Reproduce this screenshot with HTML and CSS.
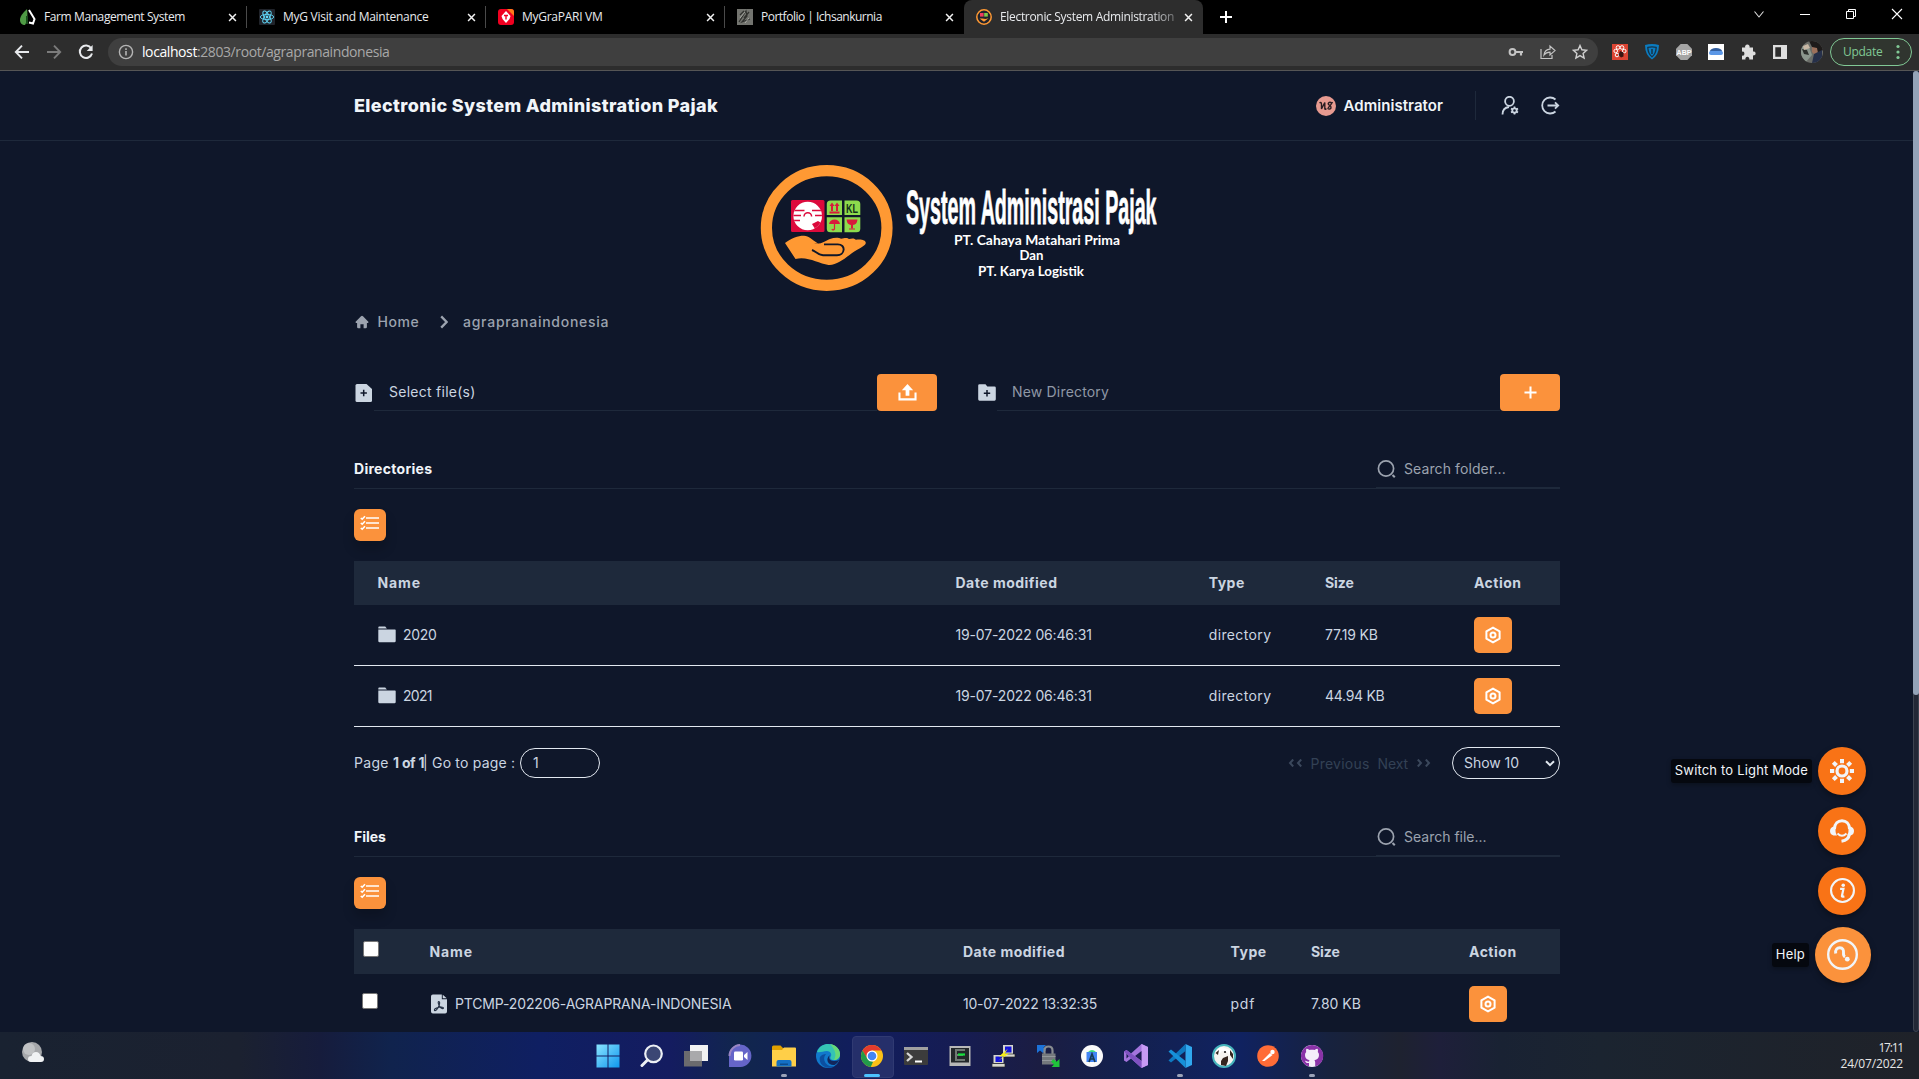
FILE: index.html
```
<!DOCTYPE html>
<html lang="en">
<head>
<meta charset="utf-8">
<title>Electronic System Administration Pajak</title>
<link rel="stylesheet" href="styles.css">
</head>
<body>
<svg class="defs" width="0" height="0">
  <symbol id="close" viewBox="0 0 10 10"><path d="M1.2 1.2l7.6 7.6M8.8 1.2L1.2 8.8" stroke="#f1f1f1" stroke-width="1.7" fill="none"/></symbol>
  <symbol id="hex" viewBox="0 0 18 18"><path d="M9 1.6l6.6 3.7v7.4L9 16.4l-6.6-3.7V5.3z" fill="none" stroke="#fff" stroke-width="2" stroke-linejoin="round"/><circle cx="9" cy="9" r="2.5" fill="none" stroke="#fff" stroke-width="2"/></symbol>
  <symbol id="checks" viewBox="0 0 20 16"><g fill="none" stroke="#fff" stroke-width="1.4"><path d="M6 3h13M6 8h13M6 13h13"/><path d="M.8 3l1.4 1.2L5 1.2M.8 8l1.4 1.2L5 6.2M.8 13l1.4 1.2L5 11.2" stroke-width="1.6"/></g></symbol>
  <symbol id="lens" viewBox="0 0 20 20"><circle cx="9" cy="9.5" r="7.6" fill="none" stroke="#9ca3af" stroke-width="1.7"/><path d="M15.500 16l2.300 2.300" stroke="#9ca3af" stroke-width="2"/></symbol>
  <symbol id="folder" viewBox="0 0 18 17"><path d="M.3 1.8C.3 1 .8.5 1.5.5h5.7l1.7 1.9H.3z" fill="#cbd5e1"/><path d="M.3 3.6h16.4c.7 0 1 .4 1 1v10.5c0 .7-.4 1.1-1 1.1H1.3c-.6 0-1-.4-1-1.1z" fill="#cbd5e1"/></symbol>
</svg>

<div class="tabstrip">
  <div class="tab"><svg class="fav" viewBox="0 0 16 16"><path d="M7 0C3 4 0 7 0 11c0 3 2 5 5 5 2-3 3-9 2-16z" fill="#4f9b45"/><path d="M7 7v8" stroke="#184c1b" stroke-width="2"/><path d="M9 1l5.500 9-1.500 4.500-4-1" fill="none" stroke="#fff" stroke-width="2"/></svg><span class="tab-title t1">Farm Management System</span><svg class="x"><use href="#close"/></svg></div>
  <div class="tab"><svg class="fav" viewBox="0 0 16 16"><rect width="16" height="16" rx="1" fill="#20232a"/><g fill="none" stroke="#61dafb" stroke-width=".9"><ellipse cx="8" cy="8" rx="6.7" ry="2.6"/><ellipse cx="8" cy="8" rx="6.7" ry="2.6" transform="rotate(60 8 8)"/><ellipse cx="8" cy="8" rx="6.7" ry="2.6" transform="rotate(120 8 8)"/></g><circle cx="8" cy="8" r="1.4" fill="#61dafb"/></svg><span class="tab-title t2">MyG Visit and Maintenance</span><svg class="x"><use href="#close"/></svg></div>
  <div class="tab"><svg class="fav" viewBox="0 0 16 16"><rect width="16" height="16" rx="3" fill="#f00020"/><path d="M9 0h4q3 0 3 3v4z" fill="#ff7a1a"/><path d="M8 2l4.500 5-1 3L8 14l-3.500-4-1-3z" fill="#fff"/><path d="M6 6.500h4M8 6.500v4" stroke="#f00020" stroke-width="1.400"/></svg><span class="tab-title t3">MyGraPARI VM</span><svg class="x"><use href="#close"/></svg></div>
  <div class="tab"><svg class="fav" viewBox="0 0 16 16"><rect width="16" height="16" fill="#73746f"/><path d="M2 13L9 2l1 5-5 6 8-3M7 9l5-6M3 6l4-4" fill="none" stroke="#30312e" stroke-width="1.200"/><path d="M3 9l5-6M8 14l4-5" stroke="#b9bab4" stroke-width=".8"/></svg><span class="tab-title t4">Portfolio | Ichsankurnia</span><svg class="x"><use href="#close"/></svg></div>
  <div class="tab active"><svg class="fav" viewBox="0 0 16 16"><circle cx="8" cy="8" r="7.200" fill="#20232c" stroke="#ff9933" stroke-width="1.500"/><rect x="4" y="4" width="3.600" height="3.600" fill="#ef3b62"/><rect x="8.200" y="4" width="3.600" height="3.600" fill="#7cc84a"/><path d="M3.500 9.500h3l3 .5 3-.8-4.500 3.500z" fill="#ff9933"/></svg><span class="tab-title t5">Electronic System Administration</span><svg class="x"><use href="#close"/></svg></div>
  <svg class="newtab" viewBox="0 0 12 12"><path d="M6 0v12M0 6h12" stroke="#fff" stroke-width="2"/></svg>
  <div class="winctl">
    <svg viewBox="0 0 12 12"><path d="M1.500 3.500L6 9l4.500-5.500" fill="none" stroke="#ddd" stroke-width="1.100"/></svg>
    <svg viewBox="0 0 12 12"><path d="M1 6.500h10" stroke="#fff"/></svg>
    <svg viewBox="0 0 12 12"><path d="M3.500 3V1.500h7v7H9M1.500 3.500h7v7h-7z" fill="none" stroke="#fff"/></svg>
    <svg viewBox="0 0 12 12"><path d="M1 1l10 10M11 1L1 11" stroke="#fff" stroke-width="1.100"/></svg>
  </div>
</div>

<div class="toolbar">
  <div class="nav">
    <svg viewBox="0 0 16 16"><path d="M15 8H2M8 1.700L1.800 8 8 14.300" fill="none" stroke="#e8eaed" stroke-width="1.900"/></svg>
    <svg viewBox="0 0 16 16"><path d="M1 8h13M8 1.700L14.200 8 8 14.300" fill="none" stroke="#7b7b7b" stroke-width="1.900"/></svg>
    <svg viewBox="0 0 16 16"><path d="M13.200 4.300A6.200 6.200 0 1 0 14 9.500" fill="none" stroke="#e8eaed" stroke-width="2"/><path d="M14.600 1v6H8.700z" fill="#e8eaed"/></svg>
  </div>
  <div class="omnibox">
    <svg class="info" viewBox="0 0 16 16"><circle cx="8" cy="8" r="6.600" fill="none" stroke="#b5b5b5" stroke-width="1.400"/><path d="M8 7v4.500M8 4.300v1.600" stroke="#b5b5b5" stroke-width="1.600"/></svg>
    <span class="url"><b>localhost</b>:2803/root/agrapranaindonesia</span>
    <div class="omni-icons">
      <svg viewBox="0 0 16 16"><circle cx="4.500" cy="8" r="2.900" fill="none" stroke="#c4c4c4" stroke-width="2"/><path d="M7 8h8M13 8v3.500" stroke="#c4c4c4" stroke-width="2.200"/></svg>
      <svg viewBox="0 0 16 16"><path d="M1 5v9.500h11V11" fill="none" stroke="#c4c4c4" stroke-width="1.200"/><path d="M4 11c.5-4 2.500-5.600 6-5.800V2l5 4.600-5 4.400V8.200c-3 0-4.500.8-6 2.800z" fill="none" stroke="#c4c4c4" stroke-width="1.200"/></svg>
      <svg viewBox="0 0 16 16"><path d="M8 1.500l1.900 4.300 4.700.5-3.500 3.100 1 4.600L8 11.600 3.900 14l1-4.600L1.400 6.300l4.700-.5z" fill="none" stroke="#d0d0d0" stroke-width="1.400"/></svg>
    </div>
  </div>
  <div class="ext">
    <svg viewBox="0 0 16 16"><rect width="16" height="16" fill="#dc4433"/><g fill="none" stroke="#fff" stroke-width="1"><circle cx="6" cy="3.500" r="1.800"/><circle cx="10" cy="3.500" r="1.800"/><circle cx="3.700" cy="7" r="1.800"/><circle cx="12.300" cy="7" r="1.800"/><circle cx="5" cy="11" r="1.800"/></g><path d="M8 7l3.500 1.500v4L9 13.500 6.500 11z" fill="#3a1512"/></svg>
    <svg viewBox="0 0 16 16"><path d="M1 1q7-2 14 0 0 10-7 14.500Q1 11 1 1z" fill="#0b7cc0"/><path d="M3.800 3.400q4.200-1 8.400 0Q12 9.500 8 12.800 4 9.500 3.800 3.400z" fill="none" stroke="#173246" stroke-width="1.300"/><path d="M8 5v5" stroke="#173246" stroke-width="1.500"/></svg>
    <svg viewBox="0 0 16 16"><path d="M4.700 0h6.600L16 4.700v6.600L11.300 16H4.700L0 11.300V4.700z" fill="#a5a5a5"/><text x="8" y="10.800" text-anchor="middle" class="abp">ABP</text></svg>
    <svg viewBox="0 0 16 16"><rect width="16" height="16" fill="#fff"/><ellipse cx="8" cy="7" rx="6" ry="3" fill="#335f9f"/><rect x="1" y="7" width="14" height="4" rx="2" fill="#5b97e6"/></svg>
    <svg viewBox="0 0 16 16"><path d="M2 3.500h3.200a2.300 2.300 0 1 1 4.300 0H13v4a2 2 0 1 1 0 3.800v4.200H9.200a2 2 0 1 0-3.700 0H2v-3.900a2 2 0 1 0 0-3.900z" fill="#dedede"/></svg>
    <svg viewBox="0 0 16 16"><path d="M1 1h14v14H1zM3.300 3.300v9.400H9V3.300z" fill="#dedede" fill-rule="evenodd"/></svg>
    <svg class="me" viewBox="0 0 22 22"><clipPath id="c"><circle cx="11" cy="11" r="11"/></clipPath><g clip-path="url(#c)"><rect width="22" height="22" fill="#6b6d68"/><path d="M8 0h14v9l-5 4-5-5z" fill="#1d1a1a"/><path d="M0 4l8 2 3 8-7 8H0z" fill="#8b968d"/><path d="M1 8l5 1 2 5-5-1z" fill="#2c2f2c"/><path d="M11 6l5 1 1 5-3 2-3-3z" fill="#9c705b"/><path d="M13 13l8-4v13H11z" fill="#26304a"/><path d="M2 5l5-2 2 4-6 2z" fill="#c8b8a5"/></g></svg>
  </div>
  <div class="update"><span>Update</span><svg viewBox="0 0 4 16"><g fill="#81c995"><circle cx="2" cy="2.500" r="1.600"/><circle cx="2" cy="8" r="1.600"/><circle cx="2" cy="13.500" r="1.600"/></g></svg></div>
</div>

<div class="page">
  <header class="header">
    <div class="wrap header-in">
      <h1>Electronic System Administration Pajak</h1>
      <div class="user">
        <svg class="avatar" viewBox="0 0 20 20"><circle cx="10" cy="10" r="10" fill="#e79a90"/><path d="M3.500 7q2-1.500 2 1.500V13L8.800 6.500V13q.5 1 1.500-.5M15.500 7q-1.500-1.500-3 0c-1.500 2 3.500 2.500 2.500 5q-1.500 2-3.500.3M12 12q3-3 4.500-6" fill="none" stroke="#2a1d22" stroke-width="1.400"/></svg>
        <b>Administrator</b>
      </div>
      <div class="head-icons">
        <svg viewBox="0 0 20 20"><g fill="none" stroke="#cbd5e1" stroke-width="1.800"><ellipse cx="9.500" cy="5.300" rx="4.400" ry="4.500"/><path d="M2.500 18.500c0-4.600 2-7 6.500-7.500"/><circle cx="14.500" cy="14.500" r="2.200"/></g><path d="M14.500 10.500v1.800M14.500 16.700v1.800M11 12.500l1.600.9M16.400 15.600l1.600.9M11 16.500l1.600-.9M16.400 13.400l1.600-.9" stroke="#cbd5e1" stroke-width="1.700"/></svg>
        <svg viewBox="0 0 20 20"><path d="M15.500 3.500A8 8 0 1 0 15.500 15.500M7.500 9.500H18M15 6.400L18.200 9.500 15 12.600" fill="none" stroke="#cbd5e1" stroke-width="1.800"/></svg>
      </div>
    </div>
  </header>

  <main class="wrap">
    <div class="logo">
      <svg viewBox="757 163 400 130" width="400" height="130">
        <ellipse cx="826.700" cy="228" rx="60.300" ry="57.300" fill="none" stroke="#ff9933" stroke-width="11.200"/>
        <rect x="791" y="200" width="33.500" height="32" rx="1.500" fill="#dc0a3c"/>
        <clipPath id="sun"><circle cx="807.700" cy="216" r="14.300"/></clipPath>
        <g clip-path="url(#sun)"><rect x="791" y="200" width="34" height="32" fill="#fff"/><path d="M791 210.500h13.500M812 210.500h13M791 215.500h10M815 215.500h10M791 220.500h9" stroke="#dc0a3c" stroke-width="1.500"/><path d="M804 216.500a3.800 3.800 0 0 1 7.600 0" fill="none" stroke="#dc0a3c" stroke-width="1.500"/><path d="M812 224l6-3 5 3v8h-6z" fill="#dc0a3c"/></g>
        <path d="M830.500 200.500h11.500v14.500h-15.200v-11q0-3.500 3.700-3.500zM844.500 200.500h12q3.800 0 3.800 3.500v11h-15.800zM826.800 217.300H842v15h-11.500q-3.700 0-3.700-3.500zM844.500 217.300h15.800v11.500q0 3.500-3.800 3.500h-12z" fill="#8ddb4c"/>
        <path d="M829.500 212.500h10M832 211v-6.500M837 211v-6.500" stroke="#d81b3c" stroke-width="2"/><path d="M829.500 206l2.500-3.500 2.500 3.500zM834.500 206l2.500-3.500 2.500 3.500z" fill="#d81b3c"/>
        <text x="846" y="213" class="logo-kl" textLength="12" lengthAdjust="spacingAndGlyphs">KL</text>
        <path d="M829 224q1-4.500 5.500-4.500t5.500 4.500zM846.500 219.500h11q-.5 5-4.500 5.500v3.500h-2V225q-4-.5-4.500-5.500z" fill="#d81b3c"/><path d="M834.500 223v6q-2 2-2.500 0M849 229h6" fill="none" stroke="#d81b3c" stroke-width="1.200"/>
        <path d="M785 243c7-5 13-7.300 19-7.200 5 .2 8 4 14 7.700h-4c7.500 1.300 12-3 16-4.500 4-1.600 8.500-1.800 11-.3 5-1.300 7-.6 8 .3 4-1.300 6-.3 7 .8 6-1 11 .8 9.500 4.200-1.500 2.700-9 5.500-16 11-7 5.300-14 10.500-21 9.900-10-1.300-21-9-33-5.900z" fill="#ff9933"/>
        <path d="M812 250c4 1.500 6 5 11 5.200h14c8 0 9.500-11 .5-10.800H824" fill="none" stroke="#0f172a" stroke-width="1.900"/>
        <text x="906" y="223.500" class="logo-t" textLength="250.500" lengthAdjust="spacingAndGlyphs">System Administrasi Pajak</text>
        <text x="954" y="245" class="logo-s" textLength="166" lengthAdjust="spacingAndGlyphs">PT. Cahaya Matahari Prima</text>
        <text x="1019.500" y="260" class="logo-s" textLength="24" lengthAdjust="spacingAndGlyphs">Dan</text>
        <text x="978" y="275.500" class="logo-s" textLength="106" lengthAdjust="spacingAndGlyphs">PT. Karya Logistik</text>
      </svg>
    </div>

    <nav class="crumbs">
      <svg class="home" viewBox="0 0 14 14"><path d="M7 .7l1 .5L13.600 7l-.6.900h-1.100V12q0 1.300-1.200 1.300H8.600V9.200H5.400v4.100H3.300Q2.100 13.300 2.100 12V7.900H1L.4 7 6 1.200z" fill="#9ca3af"/></svg>
      <span class="ls8">Home</span>
      <svg class="chev" viewBox="0 0 8 14"><path d="M1.200 1.400L6.600 7l-5.400 5.600" fill="none" stroke="#9ca3af" stroke-width="2.300"/></svg>
      <span class="ls8">agrapranaindonesia</span>
    </nav>

    <div class="forms">
      <div class="field">
        <svg class="f-ico" viewBox="0 0 17 18"><path d="M2 0h9.500L17 5v11.500q0 1.500-1.500 1.500H2Q.5 18 .5 16.500v-15Q.5 0 2 0z" fill="#cbd5e1"/><path d="M8.700 5.800v6.400M5.500 9h6.400" stroke="#0f172a" stroke-width="1.500"/></svg>
        <div class="line sel">Select file(s)</div>
        <button class="btn wide"><svg viewBox="0 0 20 18"><path d="M1.500 9v7.300h17V9" fill="none" stroke="#fff" stroke-width="2.200"/><path d="M10 0l6 6.500h-4V12.500H8V6.500H4z" fill="#fff"/></svg></button>
      </div>
      <div class="field">
        <svg class="f-ico dir" viewBox="0 0 18 17"><path d="M1.500.3h6L9.300 2.500h7.200q1.300 0 1.300 1.300v11.500q0 1.400-1.300 1.400h-15Q.2 16.700.2 15.300V1.600Q.2.300 1.500.3z" fill="#cbd5e1"/><path d="M9 6v6.400M5.800 9.200h6.400" stroke="#0f172a" stroke-width="1.500"/></svg>
        <div class="line newdir">New Directory</div>
        <button class="btn wide"><svg class="plus" viewBox="0 0 14 14"><path d="M7 .5v13M.5 7h13" stroke="#fff" stroke-width="2.200"/></svg></button>
      </div>
    </div>

    <section class="block">
      <div class="block-head"><h2>Directories</h2><div class="search"><svg><use href="#lens"/></svg><span>Search folder...</span></div></div>
      <button class="btn list"><svg><use href="#checks"/></svg></button>
      <div class="table dirs">
        <div class="tr th"><span class="ls11">Name</span><span>Date modified</span><span>Type</span><span class="ls1">Size</span><span>Action</span></div>
        <div class="tr"><span class="name"><svg class="fold"><use href="#folder"/></svg>2020</span><span class="num">19-07-2022 06:46:31</span><span class="ls5">directory</span><span class="num">77.19 KB</span><button class="btn act"><svg><use href="#hex"/></svg></button></div>
        <div class="tr"><span class="name n2"><svg class="fold"><use href="#folder"/></svg>2021</span><span class="num">19-07-2022 06:46:31</span><span class="ls5">directory</span><span class="num kb">44.94 KB</span><button class="btn act"><svg><use href="#hex"/></svg></button></div>
      </div>
      <div class="pager">
        <span class="pg">Page</span><b>1 of 1</b><span class="goto">| Go to page :</span><span class="pginput">1</span>
        <div class="pgnav"><svg viewBox="0 0 15 8"><path d="M5.200.5L2 4l3.200 3.500M13.200.5L10 4l3.200 3.500" fill="none" stroke="#3b485c" stroke-width="2"/></svg><span class="prev">Previous</span><span class="next">Next</span><svg viewBox="0 0 15 8"><path d="M1.800.5L5 4 1.800 7.500M9.800.5L13 4 9.800 7.500" fill="none" stroke="#3b485c" stroke-width="2"/></svg></div>
        <div class="select"><span>Show 10</span><svg viewBox="0 0 10 7"><path d="M1 1.200l4 4 4-4" fill="none" stroke="#e2e8f0" stroke-width="2"/></svg></div>
      </div>
    </section>

    <section class="block">
      <div class="block-head"><h2 class="ls1">Files</h2><div class="search"><svg><use href="#lens"/></svg><span class="sf">Search file...</span></div></div>
      <button class="btn list"><svg><use href="#checks"/></svg></button>
      <div class="table files">
        <div class="tr th"><i class="box head"></i><span class="ls11">Name</span><span>Date modified</span><span>Type</span><span class="ls1">Size</span><span>Action</span></div>
        <div class="tr"><i class="box"></i><span class="name pdfname"><svg class="pdf" viewBox="0 0 17 20"><path d="M2 0h9.500v5H17v13q0 2-2 2H2q-2 0-2-2V2q0-2 2-2z" fill="#cbd5e1"/><path d="M12.500.3l4.200 3.700h-4.200z" fill="#cbd5e1"/><path d="M8.200 7.500c1.500 0 1 2.500.3 4.300-1 2.700-3.500 5.700-4.700 5.200-1-1.500 2-3 5-3.500 2.500-.4 4.700-.1 4.400 1-.6 1.200-3.400-.6-4.400-2.500-.9-1.700-1.700-4.300-.6-4.500z" fill="none" stroke="#243044" stroke-width="1.200"/></svg>PTCMP-202206-AGRAPRANA-INDONESIA</span><span class="num2">10-07-2022 13:32:35</span><span class="pdft">pdf</span><span>7.80 KB</span><button class="btn act"><svg><use href="#hex"/></svg></button></div>
      </div>
    </section>
  </main>

  <div class="fabs">
    <div class="fab"><span class="tip mode">Switch to Light Mode</span><svg viewBox="0 0 24 24"><circle cx="12" cy="12" r="5" fill="none" stroke="#f1f5f9" stroke-width="3.200"/><path d="M12 0v4.200M12 19.800V24M0 12h4.200M19.800 12H24M3.300 3.300l3.200 3.200M17.500 17.500l3.200 3.200M3.300 20.700l3.200-3.200M17.500 6.500l3.200-3.200" stroke="#f1f5f9" stroke-width="4"/></svg></div>
    <div class="fab"><svg viewBox="0 0 24 24"><path d="M4.500 10C4.500 4.500 8 1.700 12 1.700S19.500 4.500 19.500 10" fill="none" stroke="#f1f5f9" stroke-width="3"/><path d="M6 7.500H3.500Q0 8.500 0 12t3.500 4.500H7q-1.500-2-1.500-4.500T6 7.500zM18 7.500h2.500Q24 8.500 24 12t-3.300 4.500H17q1.500-2 1.500-4.500T18 7.500z" fill="#f1f5f9"/><path d="M19.500 15c-.6 4.500-3 6.500-8 7.200" fill="none" stroke="#f1f5f9" stroke-width="3"/><path d="M7.500 14.500q4.500 4.500 9 0" fill="none" stroke="#f1f5f9" stroke-width="1.800"/></svg></div>
    <div class="fab"><svg class="up" viewBox="0 0 24 24"><circle cx="12" cy="12" r="11" fill="none" stroke="#f1f5f9" stroke-width="2"/><circle cx="12.700" cy="7" r="1.700" fill="#f1f5f9"/><path d="M9.700 10.500h3.200l-1.500 7q0 .8 2.400.1" fill="none" stroke="#f1f5f9" stroke-width="2.100"/></svg></div>
    <div class="fab big"><span class="tip help">Help</span><svg viewBox="0 0 32 32"><circle cx="15.500" cy="15.500" r="14.300" fill="none" stroke="#f1f5f9" stroke-width="2.400"/><path d="M8.700 14.500c-.6-4 1.500-5.800 4-5.800 3.300 0 4 2.500 3.800 5-.2 2 .3 3.600 1.500 4.200" fill="none" stroke="#f1f5f9" stroke-width="2.900"/><circle cx="20.300" cy="20.200" r="2.400" fill="#f1f5f9"/></svg></div>
  </div>
  <div class="scroll"><i></i></div>
</div>

<div class="taskbar">
  <svg class="weather" viewBox="0 0 26 24"><circle cx="12" cy="11" r="10" fill="#a6a8ab"/><circle cx="9" cy="8" r="6" fill="#c0c2c4"/><path d="M11 21q-3 0-3-3t3.500-3q1-4 4.500-4t4.500 4q3.500 0 3.500 3t-3 3z" fill="#f0f2f4"/></svg>
  <div class="apps">
    <span><svg viewBox="0 0 24 24"><defs><linearGradient id="w" x1="0" y1="0" x2="1" y2="1"><stop offset="0" stop-color="#8ae4ff"/><stop offset="1" stop-color="#0f97ee"/></linearGradient></defs><path d="M.5.500H11.500V11.500H.5zM12.500.500H23.500V11.500H12.500zM.5 12.500H11.500V23.500H.5zM12.500 12.500H23.500V23.500H12.500z" fill="url(#w)"/></svg></span>
    <span><svg viewBox="0 0 24 24"><circle cx="13.500" cy="9.800" r="8.300" fill="#3b4674" stroke="#eceff4" stroke-width="2.200"/><path d="M7.500 16L2 21.500" stroke="#eceff4" stroke-width="3" stroke-linecap="round"/></svg></span>
    <span><svg viewBox="0 0 24 24"><rect x="6" y="1" width="18" height="16" fill="#f2f2f2"/><rect y="7" width="18" height="15.500" fill="#6b6b6e"/><rect x="6" y="7" width="12" height="10" fill="#a9a9ab"/></svg></span>
    <span><svg viewBox="0 0 24 24"><path d="M1 23V12A11.200 11.200 0 1 1 12.500 23z" fill="#6565c8"/><path d="M1.500 12A11 11 0 0 1 12 1" fill="none" stroke="#9a86c4" stroke-width="2"/><rect x="6" y="7.500" width="9" height="9" rx="1.300" fill="#fff"/><path d="M16 11l3.500-3v8L16 13z" fill="#fff"/></svg></span>
    <span class="on"><svg viewBox="0 0 24 24"><path d="M0 3q0-1.500 1.500-1.500h7L11 4h9v4H0z" fill="#e0a000"/><path d="M0 6h10l2-2.500h11q1 0 1 1V22.500H0z" fill="#ffcf48"/><path d="M4.500 22.500V18q0-2 2-2h11q2 0 2 2v4.500z" fill="#1470c4"/><rect x="8" y="19.500" width="8" height="1.500" fill="#0c4c8c"/></svg></span>
    <span><svg viewBox="0 0 24 24"><circle cx="12" cy="12" r="12" fill="#1179cc"/><path d="M1 8C3 2 8 0 12 0c7 0 12 5 12 10 0 4-3 6-6 6-3.500 0-4.500-2-3-4 1-2-1-5-4-5-4 0-7 2-10 1z" fill="#35c4b4"/><path d="M14 0c6 1 10 5 10 10 0 4-3 6-6 6 3-5 1-11-4-16z" fill="#67d977"/><path d="M10 10c-5 6 1 14 9 12-9 5-17-2-15-9 1-2 4-3 6-3z" fill="#0c4fa0"/><path d="M14 11c-2 3 0 6 4 6 3 0 5-1 5.500-2-1 3-3 5-5 6-6 1-10-6-4.500-10z" fill="#12265c"/></svg></span>
    <span class="cur"><svg viewBox="0 0 24 24"><circle cx="12" cy="12" r="11" fill="#fbc116"/><path d="M2.500 6.500A11 11 0 0 1 21.500 6.500H12l-4.800 8.300z" fill="#e33b2e"/><path d="M2.500 6.500l5 8.200 4.500 2.800 1 .5L10.700 23A11 11 0 0 1 2.500 6.500z" fill="#229a4a"/><circle cx="12" cy="12" r="5.500" fill="#fff"/><circle cx="12" cy="12" r="4.300" fill="#4285f4"/></svg></span>
    <span><svg viewBox="0 0 24 24"><rect y="3" width="24" height="18" rx="1" fill="#3c3c3c"/><path d="M0 3h24v3H0z" fill="#a0a0a0"/><path d="M3 9l4.500 4L3 17" fill="none" stroke="#d8d8d8" stroke-width="2.300"/><path d="M11 17.500h7" stroke="#fff" stroke-width="2"/></svg></span>
    <span><svg viewBox="0 0 24 24"><rect x="1.500" y="2" width="21" height="20" fill="#b8b8b8"/><rect x="3" y="4" width="18" height="14.500" fill="#23272a"/><path d="M17 6H8v10h9M8 11h7" fill="none" stroke="#707874" stroke-width="2"/><path d="M10 10.500h7" stroke="#14e03a" stroke-width="2.200"/></svg></span>
    <span><svg viewBox="0 0 24 24"><path d="M11 1h10v9H11zM1.500 11h10v8h-10z" fill="#d7d7ce"/><path d="M13 2.500h6.500v6H13zM3.500 12.500H10V18H3.500z" fill="#1414d8"/><path d="M11 10h12v3H11zM0 19.500h13V23H0z" fill="#d7d7ce" stroke="#222" stroke-width=".7"/><path d="M16 4.500l-9 8 5-.5-6 5 11-7.500-4.500.3z" fill="#f6ee18"/></svg></span>
    <span><svg viewBox="0 0 24 24"><path d="M1 1h9L7.500 3.500 10 6 7 9 4 6.500 1 9z" fill="#1c72d8"/><path d="M8.500 11V6.500q0-4 4-4t4 4V11" fill="none" stroke="#888c90" stroke-width="2.200"/><rect x="6" y="9.500" width="13.500" height="11" fill="#74787c"/><path d="M6 12.500h13.500M6 16.500h13.500" stroke="#94989c" stroke-width="1.200"/><path d="M23.500 23h-8l2.500-2.500-3-3L17.500 15l3 2.700L23.500 15z" fill="#1fc53a"/></svg></span>
    <span><svg viewBox="0 0 24 24"><circle cx="12" cy="12" r="11" fill="#fafafa"/><rect x="6.500" y="8" width="10.500" height="10" fill="#4285f4"/><path d="M8 8q4-4 8 0z" fill="#3ddc84"/><path d="M9 18l3-8 3 8M10 15h4" stroke="#173b54" stroke-width="1.700" fill="none"/></svg></span>
    <span><svg viewBox="0 0 24 24"><path d="M17.500 0L24 3v18l-6.500 3L7 14.500 2.500 18 0 16.500v-9L2.500 6 7 9.500z" fill="#a374dc"/><path d="M17.500 0L24 3v18l-6.500 3z" fill="#c79af4"/><path d="M17.500 7v10L11 12zM2.500 9.500v5L5 12z" fill="#1b1d50"/><path d="M0 7.500L2.500 6 17.500 17v7L7 14.500z" fill="#7f52c0"/></svg></span>
    <span class="on"><svg viewBox="0 0 24 24"><path d="M17.500 0L24 3v18l-6.500 3z" fill="#30a8ee"/><path d="M17.500 0v7L3 18.500.5 16.500z" fill="#0e78c0"/><path d="M17.500 24v-7L3 5.500.5 7.500z" fill="#1690d8"/></svg></span>
    <span><svg viewBox="0 0 24 24"><circle cx="12" cy="12" r="11" fill="#f6f4f0" stroke="#46b4bc" stroke-width="2"/><path d="M4 9q1-5 6-6l8 3 3 7-3-1-3-4-5-1-3 3z" fill="#fff"/><path d="M9 17l2-3 5-2v5l-2 5-5-1zM3.500 9L7 6l-1 5zM18 6l3 4v5l-3-4z" fill="#35261f"/><circle cx="13" cy="8" r="1.100" fill="#222"/></svg></span>
    <span><svg viewBox="0 0 24 24"><circle cx="12" cy="12" r="10.800" fill="#ff6c37"/><path d="M6 17l8-8 2.500 2-8 6z" fill="#fff"/><circle cx="16.500" cy="8" r="2.200" fill="#fff"/></svg></span>
    <span class="on"><svg viewBox="0 0 24 24"><circle cx="12" cy="12" r="11" fill="#f4eefa"/><path d="M12 1a11 11 0 0 0-3 21.600V19c-2.500.5-3.300-.8-4-2.300 1.500-.3 2 1.300 4 .9 0-.6.200-1 .6-1.400C6.500 15.700 5 14 5 11c0-1.300.4-2.300 1.200-3.100-.3-1-.2-2.100.2-3.100 1 0 2 .5 3 1.300 1.700-.4 3.500-.4 5.200 0 1-.8 2-1.300 3-1.300.4 1 .5 2.100.2 3.100.8.8 1.200 1.800 1.200 3.100 0 3-1.500 4.700-4.600 5.200.5.500.8 1.200.8 2.200v4.200A11 11 0 0 0 12 1z" fill="#8a33a8"/></svg></span>
  </div>
  <div class="clock"><span class="time">17:11</span><span>24/07/2022</span></div>
</div>
</body>
</html>
```
FILE: styles.css
```
* { box-sizing: border-box; }
body {
  margin: 0;
  width: 1919px;
  height: 1079px;
  overflow: hidden;
  display: flex;
  flex-direction: column;
  background: #0f172a;
  font-family: Inter, sans-serif;
  font-size: 14px;
  color: #cbd5e1;
  white-space: nowrap;
}
svg { display: block; flex: none; }
.defs { position: absolute; }
h1, h2 { margin: 0; }

/* browser tabs */
.tabstrip {
  flex: none;
  height: 34px;
  padding-left: 8px;
  display: flex;
  background: #000;
  font: 12px "Open Sans", sans-serif;
  color: #e8eaed;
}
.tab {
  width: 239px;
  height: 34px;
  padding: 0 9px 0 12px;
  display: flex;
  align-items: center;
  border-right: 1px solid transparent;
  border-image: linear-gradient(transparent 7px, #4a4a4a 7px, #4a4a4a 27px, transparent 27px) 1;
}
.tab:nth-child(4) { border-image: none; }
.tab.active {
  background: #2d2d2d;
  border: 0;
  border-image: none;
  border-radius: 8px 8px 0 0;
}
.fav { width: 16px; height: 16px; }
.tab-title { width: 176px; margin-left: 8px; padding-bottom: 1px; }
.tab .x { width: 9px; height: 9px; margin-left: auto; }
.tab.active .x { margin-right: 1px; }
.t1 { letter-spacing: -.4px; }
.t2 { letter-spacing: -.27px; }
.t3 { letter-spacing: -.27px; }
.t4 { letter-spacing: -.5px; }
.t5 {
  letter-spacing: -.32px;
  -webkit-mask-image: linear-gradient(90deg, #000 150px, rgba(0, 0, 0, .3) 176px);
  mask-image: linear-gradient(90deg, #000 150px, rgba(0, 0, 0, .3) 176px);
}
.newtab { width: 12px; height: 12px; margin: 11px 0 0 17px; }
.winctl { margin: 8px 16px 0 auto; display: flex; gap: 34px; }
.winctl svg { width: 12px; height: 12px; }

.toolbar {
  flex: none;
  height: 37px;
  display: flex;
  align-items: center;
  background: #2d2d2d;
  border-bottom: 1px solid #555;
}
.nav { width: 108px; padding-left: 14px; display: flex; gap: 16px; }
.nav svg { width: 16px; height: 16px; }
.omnibox {
  width: 1490px;
  height: 28px;
  padding: 0 10px;
  display: flex;
  align-items: center;
  border-radius: 14px;
  background: #3f3f3f;
}
.info { width: 16px; height: 16px; }
.url {
  margin-left: 8px;
  padding-bottom: 1px;
  font: 14px "Open Sans", sans-serif;
  letter-spacing: -.41px;
  color: #a8a8a8;
}
.url b { font-weight: 400; color: #fff; }
.omni-icons { margin-left: auto; display: flex; gap: 16px; }
.omni-icons svg { width: 16px; height: 16px; }
.ext { margin-left: 14px; display: flex; align-items: center; gap: 16px; }
.ext svg { width: 16px; height: 16px; }
.ext svg.me { width: 22px; height: 22px; margin-left: -3px; }
.abp { font: bold 7px "Liberation Sans", sans-serif; fill: #fff; }
.update {
  width: 82px;
  height: 28px;
  margin-left: 7px;
  padding: 0 11px 0 12px;
  display: flex;
  align-items: center;
  justify-content: space-between;
  border: 1px solid #81c995;
  border-radius: 14px;
  font: 12px "Open Sans", sans-serif;
  letter-spacing: -.3px;
  color: #81c995;
  background: #30352f;
}
.update span { padding-bottom: 1px; }
.update svg { width: 4px; height: 16px; }

/* application page */
.page { position: relative; flex: none; height: 961px; overflow: hidden; }
.wrap { width: 1206px; margin-left: 354px; }
.header { height: 70px; border-bottom: 1px solid #1e293b; }
.header-in { height: 69px; display: flex; align-items: center; }
h1 { font-size: 18px; font-weight: 800; letter-spacing: .36px; color: #f1f5f9; }
.user { margin-left: auto; display: flex; align-items: center; gap: 8px; letter-spacing: .05px; }
.user b { font-size: 15px; font-weight: 600; color: #f1f5f9; }
.avatar { width: 20px; height: 20px; }
.head-icons {
  height: 29px;
  margin-left: 32px;
  padding-left: 24px;
  display: flex;
  align-items: center;
  gap: 20px;
  border-left: 1px solid #1e293b;
}
.head-icons svg { width: 20px; height: 20px; }

.logo { padding: 22px 0 15px; display: flex; justify-content: center; }
.logo svg { overflow: visible; }
.logo-t { font: bold 49px "Liberation Sans", sans-serif; fill: #fff; stroke: #fff; stroke-width: .8px; }
.logo-s { font: bold 14px Lato, sans-serif; fill: #fff; }
.logo-kl { font: bold 13px "Liberation Sans", sans-serif; fill: #14311a; }

.crumbs { height: 28px; padding-left: 1px; display: flex; align-items: center; font-weight: 500; color: #9ca3af; }
.crumbs span { padding-bottom: 1px; }
.home { width: 14px; height: 14px; }
.crumbs .ls8:nth-of-type(1) { margin-left: 8.500px; letter-spacing: .55px; width: 62.500px; }
.chev { width: 8px; height: 14px; }
.chev + .ls8 { margin-left: 15px; letter-spacing: .74px; }

.forms { margin-top: 38px; display: flex; gap: 40px; }
.field { width: 583px; height: 37px; display: flex; align-items: center; }
.f-ico { width: 17px; height: 18px; margin: 0 2px 0 1px; }
.dir { width: 18px; height: 17px; margin: 0 1px 0 1px; }
.line { flex: 1; height: 37px; line-height: 35px; padding-left: 15px; border-bottom: 1px solid #1e293b; }
.sel { letter-spacing: .26px; }
.newdir { letter-spacing: .18px; color: #8f98a6; }
.btn {
  border: 0;
  padding: 0;
  display: flex;
  align-items: center;
  justify-content: center;
  background: #fb923c;
  border-radius: 4px;
}
.wide { width: 60px; height: 37px; padding-bottom: 1px; }
.wide svg { width: 19px; height: 17px; }
.wide svg.plus { width: 13px; height: 13px; }

.block-head {
  height: 40px;
  margin-top: 38px;
  display: flex;
  justify-content: space-between;
  border-bottom: 1px solid #1e293b;
}
h2 { font-size: 14px; font-weight: 700; line-height: 39px; letter-spacing: .28px; color: #f1f5f9; }
h2.ls1 { letter-spacing: -.05px; }
.search {
  width: 184px;
  height: 39px;
  padding-left: 1px;
  display: flex;
  align-items: center;
  gap: 7px;
  border-bottom: 1px solid #1e293b;
  color: #9ca3af;
  letter-spacing: .1px;
}
.search svg { width: 20px; height: 20px; margin-top: 1px; }
.search .sf { letter-spacing: 0; }
.list { width: 32px; height: 32px; margin: 20px 0; padding-bottom: 4px; border-radius: 6px; box-shadow: 0 8px 12px rgba(0, 0, 0, .2); }
.list svg { width: 20px; height: 16px; }

.tr { height: 61px; display: grid; align-items: center; border-bottom: 1px solid #e2e8f0; }
.tr > span { padding-bottom: 1px; }
.dirs .tr { grid-template-columns: 578px 253.200px 116.300px 149px 1fr; padding-left: 23.500px; }
.files .tr { grid-template-columns: 67.500px 533.500px 267.500px 80.500px 158px 1fr; padding-left: 8px; }
.table .th { height: 44px; border: 0; background: #1e293b; font-weight: 700; letter-spacing: .5px; }
.files .th { height: 45px; }
.th .ls11 { letter-spacing: .9px; }
.th .ls1 { letter-spacing: -.1px; }
.name { display: flex; align-items: center; gap: 7px; letter-spacing: -.3px; }
.name.n2 { letter-spacing: -.7px; }
.name.pdfname { letter-spacing: -.15px; gap: 8px; }
.fold { width: 18px; height: 17px; margin-left: .5px; }
.pdf { width: 16px; height: 20px; margin-left: 1.500px; }
.num { letter-spacing: -.16px; }
.num.kb { letter-spacing: -.3px; }
.num2 { letter-spacing: -.24px; }
.ls5 { letter-spacing: .38px; }
.pdft { letter-spacing: .8px; }
.act { width: 38px; height: 36px; border-radius: 5px; }
.act svg { width: 18px; height: 18px; }
.box { width: 16px; height: 16px; margin-bottom: 6px; background: #fff; border: 1px solid #767676; border-radius: 2px; }
.box.head { margin: 0 0 6px 1px; }

.pager { height: 32px; margin-top: 20px; display: flex; align-items: center; }
.pager > span:not(.pginput), .pager > b, .select span { padding-bottom: 1px; }
.pg { width: 39px; letter-spacing: .3px; }
.pager b { width: 30px; letter-spacing: -.45px; word-spacing: .5px; }
.goto { letter-spacing: .2px; width: 97px; }
.pginput { width: 80px; height: 30px; line-height: 27px; padding-left: 12px; border: 1px solid #e2e8f0; border-radius: 15px; }
.pgnav { margin-left: auto; display: flex; align-items: center; gap: 8px; color: #334155; }
.pgnav svg { width: 15px; height: 8px; }
.prev { letter-spacing: .22px; }
.next { letter-spacing: -.1px; }
.select {
  width: 108px;
  height: 32px;
  margin-left: 21px;
  padding: 0 4px 0 11px;
  display: flex;
  align-items: center;
  justify-content: space-between;
  border: 1px solid #e2e8f0;
  border-radius: 16px;
  letter-spacing: -.05px;
}
.select svg { width: 10px; height: 7px; }

/* floating actions over the page */
.fabs { position: absolute; right: 48px; top: 676px; display: flex; flex-direction: column; align-items: flex-end; gap: 12px; }
.fab {
  position: relative;
  width: 48px;
  height: 48px;
  margin-right: 5px;
  display: flex;
  align-items: center;
  justify-content: center;
  border-radius: 50%;
  background: #f97316;
  box-shadow: 0 3px 6px rgba(0, 0, 0, .35);
}
.fab svg { width: 24px; height: 24px; }
.fab .up { margin-bottom: 2px; width: 25px; height: 25px; }
.fab.big { width: 56px; height: 56px; margin-right: 0; background: #fb923c; }
.big svg { width: 32px; height: 32px; margin: 0 1px 1px 0; }
.tip {
  position: absolute;
  top: 12px;
  right: 54px;
  height: 24px;
  padding: 0 4px;
  line-height: 23px;
  font-size: 13px;
  letter-spacing: .17px;
  color: #f1f5f9;
  background: #05080f;
  border-radius: 3px;
  box-shadow: 0 2px 5px rgba(0, 0, 0, .3);
}
.tip.help { top: 16px; right: 62px; letter-spacing: .2px; }
.scroll { position: absolute; top: 0; right: 0; width: 6px; height: 961px; background: #232836; border: 1px solid #3d4350; border-radius: 3px; }
.scroll i { position: absolute; top: -1px; left: -1px; width: 6px; height: 624px; border-radius: 3px; background: #94a3b8; }

.taskbar {
  position: relative;
  flex: none;
  height: 47px;
  display: flex;
  background: linear-gradient(90deg, #192231 0, #1b2130 240px, #161c3c 320px, #10234d 390px, #0f1f62 540px, #141c60 670px, #11264d 740px, #111d5d 860px, #161c52 960px, #1b1d42 1040px, #14204c 1110px, #102260 1240px, #17223e 1330px, #1e2230 1400px, #1e1f3a 1440px, #192233 1500px, #1b2430 1600px, #1f2229 1919px);
}
.weather { width: 26px; height: 24px; margin: 9px 0 0 20px; }
.apps { margin-left: 540px; display: flex; }
.apps span { position: relative; width: 44px; height: 47px; padding: 12px 10px; }
.apps svg { position: relative; width: 24px; height: 24px; }
.apps .on::after, .apps .cur::after {
  content: "";
  position: absolute;
  left: 19px;
  top: 42px;
  width: 6px;
  height: 3px;
  border-radius: 2px;
  background: #9aa2b8;
}
.apps .cur::after { left: 14px; top: 42px; width: 16px; background: #4cc2ff; }
.apps .cur::before {
  content: "";
  position: absolute;
  left: 2px;
  top: 4px;
  width: 40px;
  height: 40px;
  border-radius: 4px;
  background: #252f6a;
  border: 1px solid #303a72;
}
.clock {
  margin: 8px 16px 0 auto;
  display: flex;
  flex-direction: column;
  align-items: flex-end;
  font: 12px/16px "Open Sans", sans-serif;
  letter-spacing: -.13px;
  color: #e6e6e6;
}
.time { letter-spacing: -1.200px; }
```
